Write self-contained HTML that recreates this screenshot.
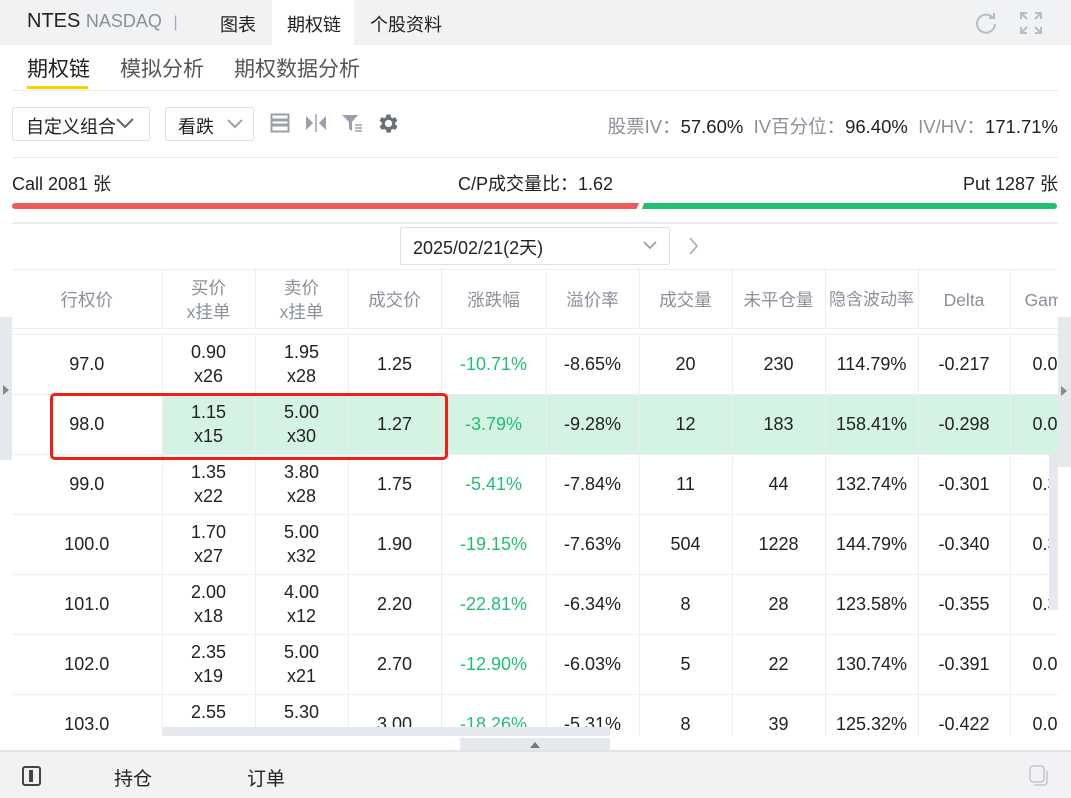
<!DOCTYPE html>
<html><head><meta charset="utf-8"><style>
*{margin:0;padding:0;box-sizing:border-box}
body{width:1071px;height:798px;overflow:hidden;background:#fff;font-family:"Liberation Sans","Noto Sans CJK SC",sans-serif;color:#222;position:relative}
.a{position:absolute}
.top{left:0;top:0;width:1071px;height:45px;background:#f1f2f4}
.t{font-size:17px}
.gray{color:#8a8f99}
table{border-collapse:collapse;table-layout:fixed}
td{text-align:center;font-size:18px;border-right:1px solid #eceef1;border-bottom:1px solid #eceef1;line-height:24px;color:#222}
th{font-weight:normal;color:#8a8f99;font-size:17.5px;border-right:1px solid #eceef1;line-height:24px;height:58px;border-bottom:1px solid #eceef1;padding-top:2px}
.g{color:#22bf72}
tr.hl td{background:#d4f3e3}
tr.hl td.w{background:#fff}
.gm{text-align:left;padding-left:22px}
</style></head><body>
<div class="a top"></div>
<div class="a" style="left:272px;top:0;width:82px;height:45px;background:#fff"></div>
<div class="a t" style="left:27px;top:10px;font-size:20px;color:#222">NTES <span style="color:#8a8f99;font-size:18px">NASDAQ</span> <span style="color:#aaa;font-size:16px;margin-left:6px">|</span></div>
<div class="a t" style="left:220px;top:11px;font-size:18px">图表</div>
<div class="a t" style="left:287px;top:11px;font-size:18px">期权链</div>
<div class="a t" style="left:370px;top:11px;font-size:18px">个股资料</div>
<svg class="a" style="left:974px;top:11px" width="24" height="24" viewBox="0 0 24 24"><path d="M19 7A9 9 0 1 0 21 13" fill="none" stroke="#b8bcc4" stroke-width="2"/><path d="M15 7h5V2" fill="none" stroke="#b8bcc4" stroke-width="2"/></svg>
<svg class="a" style="left:1019px;top:11px" width="24" height="24" viewBox="0 0 24 24" fill="none" stroke="#b8bcc4" stroke-width="2"><path d="M2 8V2h6M2 2l6 6M22 8V2h-6M22 2l-6 6M2 16v6h6M2 22l6-6M22 16v6h-6M22 22l-6-6"/></svg>
<div class="a" style="left:27px;top:53px;font-size:21px">期权链</div>
<div class="a" style="left:27px;top:86px;width:61px;height:3px;background:#f5d400"></div>
<div class="a" style="left:120px;top:53px;font-size:21px;color:#555">模拟分析</div>
<div class="a" style="left:234px;top:53px;font-size:21px;color:#555">期权数据分析</div>
<div class="a" style="left:12px;top:90px;width:1046px;height:1px;background:#e8eaed"></div>
<div class="a" style="left:12px;top:107px;width:138px;height:34px;border:1px solid #dfe2e6;border-radius:2px"></div>
<div class="a t" style="left:26px;top:113px;font-size:18px">自定义组合</div>
<svg class="a" style="left:114px;top:116px" width="22" height="14"><path d="M3 3l8 8 8-8" fill="none" stroke="#666" stroke-width="2"/></svg>
<div class="a" style="left:165px;top:107px;width:89px;height:34px;border:1px solid #dfe2e6;border-radius:2px"></div>
<div class="a t" style="left:178px;top:113px;font-size:18px">看跌</div>
<svg class="a" style="left:226px;top:118px" width="18" height="12"><path d="M2 2l7 7 7-7" fill="none" stroke="#999" stroke-width="1.8"/></svg>
<svg class="a" style="left:270px;top:113px" width="20" height="20"><rect x="1.5" y="1.5" width="17" height="17" fill="none" stroke="#9aa0aa" stroke-width="2"/><path d="M2 7h16M2 12h16" stroke="#9aa0aa" stroke-width="3"/></svg>
<svg class="a" style="left:305px;top:113px" width="22" height="20"><path d="M1 3l7 7-7 7z M21 3l-7 7 7 7z" fill="#9aa0aa"/><path d="M11 1v18" stroke="#9aa0aa" stroke-width="1.5"/></svg>
<svg class="a" style="left:341px;top:113px" width="22" height="20"><path d="M1 2h16l-6 7v9l-3-2V9z" fill="#9aa0aa"/><path d="M14 12h7M14 15h7M14 18h7" stroke="#9aa0aa" stroke-width="1.5"/></svg>
<svg class="a" style="left:376px;top:111px" width="25" height="25" viewBox="0 0 24 24"><path fill="#6b6f76" d="M19.4 13a7.5 7.5 0 0 0 0-2l2.1-1.6-2-3.5-2.5 1a7.6 7.6 0 0 0-1.7-1L15 3.3h-4l-.4 2.6a7.6 7.6 0 0 0-1.7 1l-2.5-1-2 3.5L6.6 11a7.5 7.5 0 0 0 0 2l-2.1 1.6 2 3.5 2.5-1a7.6 7.6 0 0 0 1.7 1l.4 2.6h4l.4-2.6a7.6 7.6 0 0 0 1.7-1l2.5 1 2-3.5zM13 15.5a3.5 3.5 0 1 1 0-7 3.5 3.5 0 0 1 0 7z" transform="translate(-1 0)"/></svg>
<div class="a t" style="right:13px;top:113px;white-space:nowrap;font-size:18.5px"><span class="gray">股票IV：</span>57.60% &nbsp;<span class="gray">IV百分位：</span>96.40% &nbsp;<span class="gray">IV/HV：</span>171.71%</div>
<div class="a" style="left:12px;top:157px;width:1046px;height:1px;background:#e8eaed"></div>
<div class="a t" style="left:12px;top:170px;font-size:18px">Call 2081 张</div>
<div class="a t" style="left:458px;top:170px;font-size:18px">C/P成交量比：1.62</div>
<div class="a t" style="right:13px;top:170px;font-size:18px">Put 1287 张</div>
<div class="a" style="left:12px;top:203px;width:627px;height:6px;background:#ef5a57;border-radius:3px 0 0 3px;clip-path:polygon(0 0,100% 0,99.6% 100%,0 100%)"></div>
<div class="a" style="left:642px;top:203px;width:415px;height:6px;background:#22bf72;border-radius:0 3px 3px 0;clip-path:polygon(0.5% 0,100% 0,100% 100%,0 100%)"></div>
<div class="a" style="left:12px;top:222px;width:1046px;height:2px;background:#e8eaed"></div>
<div class="a" style="left:400px;top:227px;width:270px;height:38px;border:1px solid #dfe2e6;border-radius:2px"></div>
<div class="a t" style="left:413px;top:234px;font-size:18px">2025/02/21(2天)</div>
<svg class="a" style="left:642px;top:240px" width="16" height="12"><path d="M2 2l6 6 6-6" fill="none" stroke="#999" stroke-width="1.6"/></svg>
<svg class="a" style="left:688px;top:236px" width="12" height="20"><path d="M2 2l7 8-7 8" fill="none" stroke="#aaa" stroke-width="1.6"/></svg>
<div class="a" style="left:12px;top:269px;width:1046px;height:1px;background:#eceef1"></div>
<div class="a" style="left:12px;top:270px;width:1046px;height:466px;overflow:hidden">
<table style="width:1090px">
<colgroup><col style="width:150px"><col style="width:93px"><col style="width:93px"><col style="width:93px"><col style="width:105px"><col style="width:93px"><col style="width:93px"><col style="width:93px"><col style="width:93px"><col style="width:92px"><col style="width:92px"></colgroup>
<tr><th>行权价</th><th>买价<br>x挂单</th><th>卖价<br>x挂单</th><th>成交价</th><th>涨跌幅</th><th>溢价率</th><th>成交量</th><th>未平仓量</th><th style="font-size:17px">隐含波动率</th><th>Delta</th><th style="text-align:left;padding-left:14px">Gamma</th></tr>
<tr><td style="height:6px" colspan="11"></td></tr>
<tr style="height:60px"><td>97.0</td><td>0.90<br>x26</td><td>1.95<br>x28</td><td>1.25</td><td class="g">-10.71%</td><td>-8.65%</td><td>20</td><td>230</td><td>114.79%</td><td>-0.217</td><td class="gm">0.0</td></tr>
<tr class="hl" style="height:60px"><td class="w">98.0</td><td>1.15<br>x15</td><td>5.00<br>x30</td><td>1.27</td><td class="g">-3.79%</td><td>-9.28%</td><td>12</td><td>183</td><td>158.41%</td><td>-0.298</td><td class="gm">0.0</td></tr>
<tr style="height:60px"><td>99.0</td><td>1.35<br>x22</td><td>3.80<br>x28</td><td>1.75</td><td class="g">-5.41%</td><td>-7.84%</td><td>11</td><td>44</td><td>132.74%</td><td>-0.301</td><td class="gm">0.3</td></tr>
<tr style="height:60px"><td>100.0</td><td>1.70<br>x27</td><td>5.00<br>x32</td><td>1.90</td><td class="g">-19.15%</td><td>-7.63%</td><td>504</td><td>1228</td><td>144.79%</td><td>-0.340</td><td class="gm">0.3</td></tr>
<tr style="height:60px"><td>101.0</td><td>2.00<br>x18</td><td>4.00<br>x12</td><td>2.20</td><td class="g">-22.81%</td><td>-6.34%</td><td>8</td><td>28</td><td>123.58%</td><td>-0.355</td><td class="gm">0.3</td></tr>
<tr style="height:60px"><td>102.0</td><td>2.35<br>x19</td><td>5.00<br>x21</td><td>2.70</td><td class="g">-12.90%</td><td>-6.03%</td><td>5</td><td>22</td><td>130.74%</td><td>-0.391</td><td class="gm">0.0</td></tr>
<tr style="height:60px"><td>103.0</td><td>2.55<br>x20</td><td>5.30<br>x25</td><td>3.00</td><td class="g">-18.26%</td><td>-5.31%</td><td>8</td><td>39</td><td>125.32%</td><td>-0.422</td><td class="gm">0.0</td></tr>
</table></div>
<div class="a" style="left:50px;top:393px;width:398px;height:67px;border:3px solid #f01e14;border-radius:5px"></div>
<div class="a" style="left:0;top:317px;width:12px;height:143px;background:#e5e9ee"></div>
<svg class="a" style="left:3px;top:385px" width="6" height="10"><path d="M0 0l6 5-6 5z" fill="#888"/></svg>
<div class="a" style="left:1058px;top:317px;width:13px;height:150px;background:#e5e9ee"></div>
<svg class="a" style="left:1061px;top:386px" width="6" height="10"><path d="M0 0l6 5-6 5z" fill="#888"/></svg>
<div class="a" style="left:1049px;top:454px;width:9px;height:156px;background:#e5e9ee"></div>
<div class="a" style="left:162px;top:727px;width:448px;height:9px;background:#e5e9ee"></div>
<div class="a" style="left:460px;top:738px;width:150px;height:12px;background:#e5e9ee"></div>
<svg class="a" style="left:530px;top:741px" width="10" height="7"><path d="M0 7l5-6 5 6z" fill="#777"/></svg>
<div class="a" style="left:0;top:750px;width:1071px;height:48px;background:#f1f2f4;border-top:2px solid #dde3ea"></div>
<div class="a" style="left:22px;top:766px;width:19px;height:20px;border:2px solid #444;border-radius:3px"></div>
<div class="a" style="left:29px;top:770px;width:4px;height:12px;background:#444"></div>
<div class="a t" style="left:114px;top:764px;font-size:19px">持仓</div>
<div class="a t" style="left:247px;top:764px;font-size:19px">订单</div>
<svg class="a" style="left:1028px;top:764px" width="22" height="24"><rect x="2" y="2" width="14" height="16" rx="3" fill="none" stroke="#c5c8cd" stroke-width="1.6"/><path d="M6 21h10a3 3 0 0 0 3-3V7" fill="none" stroke="#c5c8cd" stroke-width="1.6"/></svg>
</body></html>
